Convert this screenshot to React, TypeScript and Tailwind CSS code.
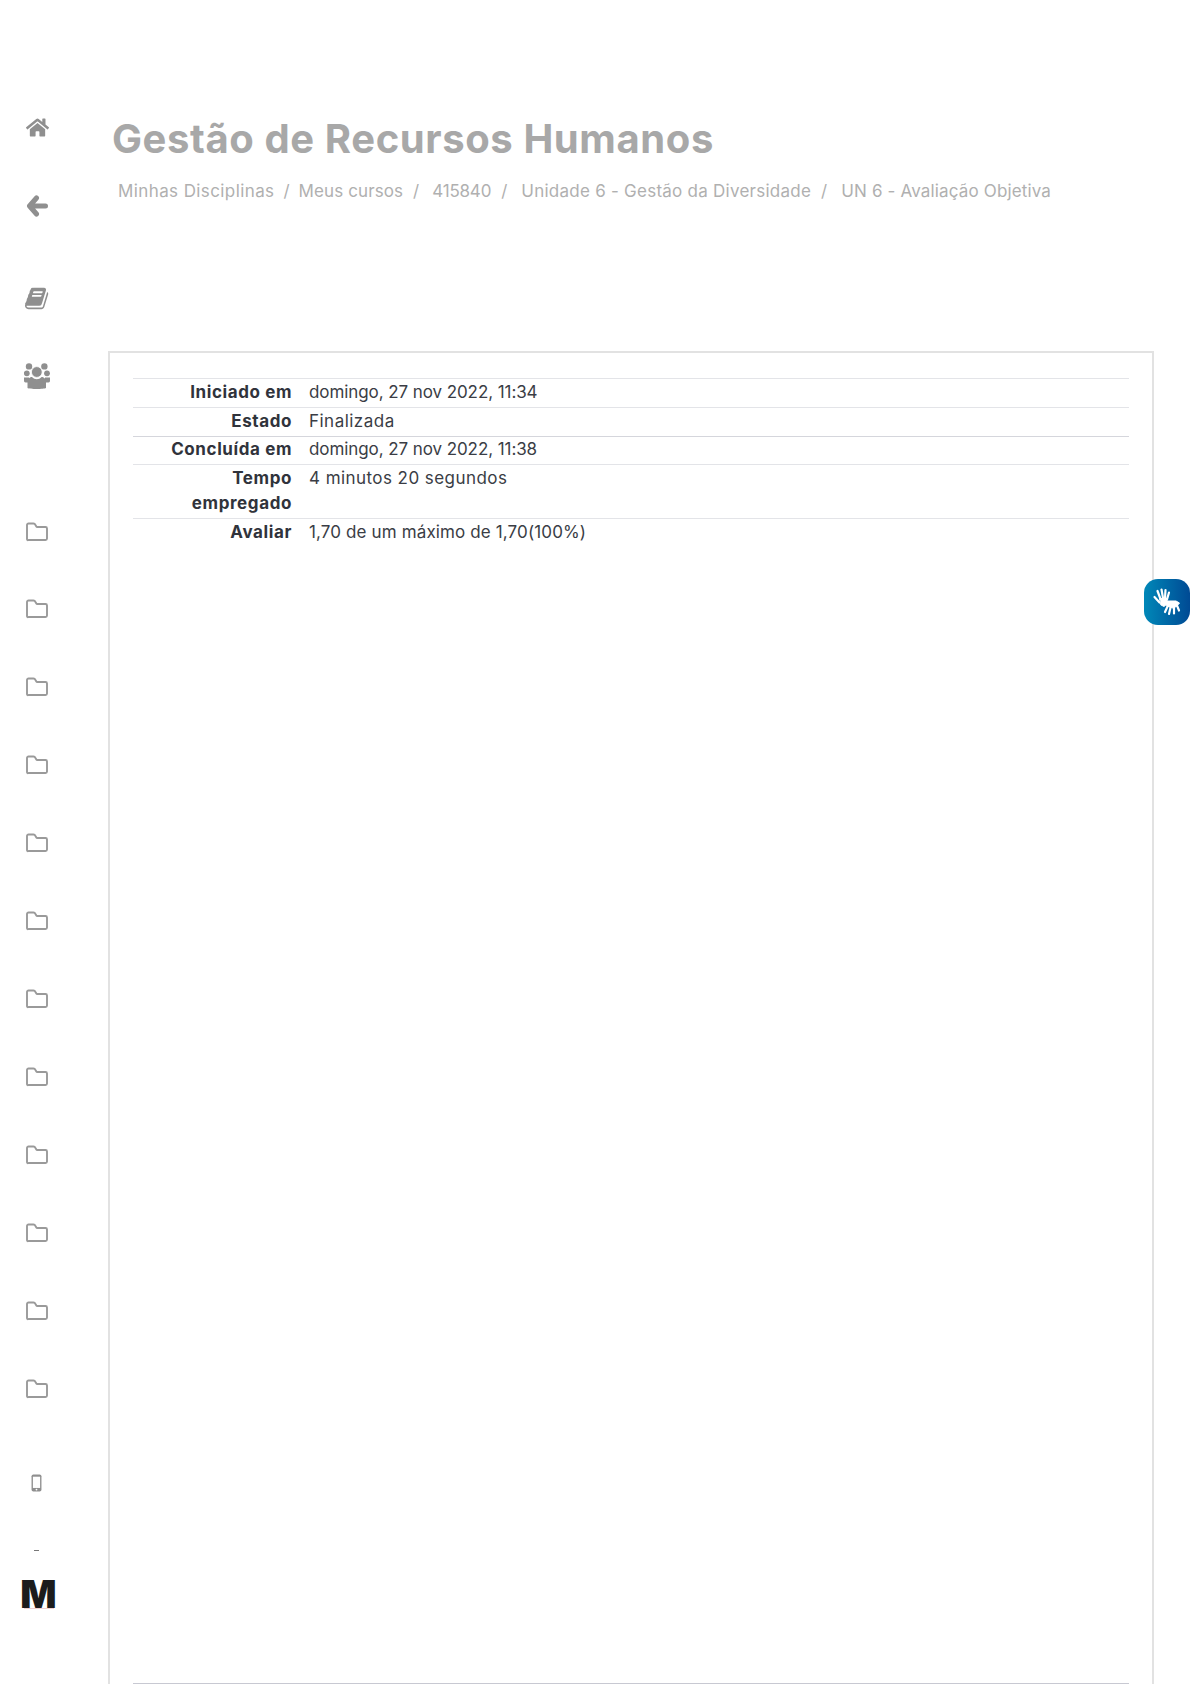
import { FaHome } from "react-icons/fa";

const FONT = "font-['Inter','Liberation_Sans',sans-serif]";

const folders = Array.from({ length: 12 }, (_, i) => i);

const rows = [
  { label: "Iniciado em", value: "domingo, 27 nov 2022, 11:34", h: "h-[29px]", border: "border-[#e3e4e8]", track: "tracking-[-0.08px]", pad: "pt-[1px]" },
  { label: "Estado", value: "Finalizada", h: "h-[29px]", border: "border-[#e3e4e8]", track: "tracking-[0.48px]", pad: "pt-[1px]" },
  { label: "Concluída em", value: "domingo, 27 nov 2022, 11:38", h: "h-[28px]", border: "border-[#d5d6dc]", track: "tracking-[-0.08px]", pad: "pt-0" },
  { label: "Tempo empregado", value: "4 minutos 20 segundos", h: "h-[54px]", border: "border-[#e3e4e8]", track: "tracking-[0.44px]", pad: "pt-[1px]" },
  { label: "Avaliar", value: "1,70 de um máximo de 1,70(100%)", h: "h-[29px]", border: "border-[#e3e4e8]", track: "tracking-[0.13px]", pad: "pt-[1px]" },
];

const Back = () => (
  <svg viewBox="0 0 22 22" className="h-[22px] w-[22px]" fill="none" stroke="#8f8f8f" strokeWidth="5" strokeLinecap="round" strokeLinejoin="round">
    <path d="M10.500 3L3.500 11l7 8M4 11h15.500" />
  </svg>
);

const Book = () => (
  <svg viewBox="0 0 1792 1792" className="w-[25px] h-[25px] fill-[#8f8f8f]">
    <path d="M1639 478q40 57 18 129l-275 906q-19 64-76.5 107.5t-122.5 43.5h-923q-77 0-148.5-53.5t-99.5-131.5q-24-67-2-127 0-4 3-27t4-37q1-8-3-21.5t-3-19.5q2-11 8-21t16.5-23.5 16.5-23.5q23-38 45-91.5t30-91.5q3-10 .5-30t-.5-28q3-11 17-28t17-23q21-36 42-92t25-90q1-9-2.5-32t.5-28q4-13 22-30.5t22-22.5q19-26 42.5-84.5t27.5-96.5q1-8-3-25.5t-2-26.5q2-8 9-18t18-23 17-21q8-12 16.5-30.5t15-35 16-36 19.5-32 26.5-23.5 36-11.5 47.5 5.5l-1 3q38-9 51-9h761q74 0 114 56t18 130l-274 906q-36 119-71.5 153.5t-128.5 34.5h-869q-27 0-38 15-11 16-1 43 24 70 144 70h923q29 0 56-15.5t35-41.5l300-987q7-22 5-57 38 15 59 43zm-1064 2q-4 13 2 22.5t20 9.5h608q13 0 25.5-9.5t16.5-22.5l21-64q4-13-2-22.5t-20-9.5h-608q-13 0-25.5 9.5t-16.5 22.5zm-83 256q-4 13 2 22.5t20 9.5h608q13 0 25.5-9.5t16.5-22.5l21-64q4-13-2-22.5t-20-9.5h-608q-13 0-25.5 9.5t-16.5 22.5z" />
  </svg>
);

const Users = () => (
  <svg viewBox="0 0 26 26" className="w-[26px] h-[26px] fill-[#8f8f8f]">
    <circle cx="5" cy="3.400" r="3.200" />
    <circle cx="20.400" cy="3.400" r="3.200" />
    <circle cx="2.800" cy="10.300" r="2.900" />
    <circle cx="23" cy="10.300" r="2.900" />
    <path d="M0 14.500h5v5H1.500C.5 19.500 0 18.500 0 17.500zM26 14.500h-5v5h3.500c1 0 1.500-1 1.500-2z" />
    <circle cx="12.800" cy="9" r="5.400" stroke="#fff" strokeWidth="0.800" />
    <path d="M3.500 25v-6.500C3.500 15.500 6 14 8 14c1.500 1.500 3 2.200 4.800 2.200s3.300-.7 4.800-2.200c2 0 4.400 1.500 4.400 4.500V25c-2 1.300-16.500 1.300-18.500 0z" />
  </svg>
);

const Folder = () => (
  <svg viewBox="0 0 24 20" className="h-[20px] w-[24px]" fill="none" stroke="#9a9a9a" strokeWidth="1.900" strokeLinejoin="round">
    <path d="M3.500 1.500h5c1 0 1.500.5 2 1.500l.7 1.300c.2.400.5.700 1.100.700h8.200c1 0 1.500.7 1.500 1.500v10c0 1-.7 1.500-1.500 1.500h-17C2.500 18.500 2 18 2 17V3c0-1 .7-1.500 1.500-1.500z" />
  </svg>
);

const Phone = () => (
  <svg viewBox="0 0 12 20" className="w-[11px] h-[18px]">
    <rect x="0.5" y="0.500" width="11" height="19" rx="2" fill="#8f8f8f" />
    <rect x="2" y="3" width="8" height="12.500" fill="#fff" />
    <circle cx="6" cy="17.300" r="1" fill="#fff" />
  </svg>
);

const Hands = () => (
  <svg viewBox="0 0 30 30" className="w-[30px] h-[30px]" fill="none" stroke="#fff" strokeLinecap="round">
    <path d="M5.500 4l3 8M9.500 2.500l1.500 8.500M13.500 3l-.5 8.500M17 5.500l-2 7M2.500 10l5 5.500" strokeWidth="2.200" />
    <path d="M8 11.500h7v5.500l-3 2.500-3-1.500z" fill="#fff" strokeWidth="1" />
    <path d="M14.500 14h9.500l3.500 2-3 3.500-4 1.500-5.500-2z" fill="#fff" strokeWidth="1" />
    <path d="M15.500 19.500l-2.500 5.500M18.500 20.500l-1.500 6.500M22 20.500v6M25 18.500l2 5" strokeWidth="2.200" />
  </svg>
);

export default function App() {
  return (
    <div className={`relative flex h-[1684px] w-[1190px] overflow-hidden bg-white ${FONT}`}>
      <aside className="flex w-[108px] shrink-0 flex-col items-center pr-[35px] pt-[114px] text-[#8f8f8f]">
        <div className="flex h-[26px] items-center pl-[1px]">
          <FaHome className="h-[23px] w-[23px]" />
        </div>
        <div className="mt-[53px] flex h-[26px] items-center pl-[1px]">
          <Back />
        </div>
        <div className="mt-[66px] flex h-[26px] items-center pl-[1px]">
          <Book />
        </div>
        <div className="mt-[52px] flex h-[26px] items-center">
          <Users />
        </div>
        <div className="mt-[129.5px] flex flex-col gap-[51.95px]">
          {folders.map((i) => (
            <div key={i} className="flex h-[26px] items-center">
              <Folder />
            </div>
          ))}
        </div>
        <div className="mt-[72px] flex h-[18px] items-center">
          <Phone />
        </div>
        <div className="mt-[58px] h-px w-[5px] bg-[#777]" />
        <div className="ml-[4px] mt-[30px] flex h-[28px] w-[30px] items-center justify-center overflow-visible border-b border-[#f0d0d0]">
          <span className="font-['Inter'] text-[38px] leading-[26px] font-black text-[#1c1c1c]">M</span>
        </div>
      </aside>

      <main className="flex min-w-0 flex-1 flex-col pr-[36px]">
        <h1 className="mt-[111px] pl-[4px] text-[40px] leading-[56px] font-bold tracking-[0.6px] text-[#a8a8a8]">
          Gestão de Recursos Humanos
        </h1>
        <nav className="mt-[12px] flex h-[26px] items-center pl-[10px] text-[17px] text-[#b0b0b0]">
          <span className="tracking-[0.4px]">Minhas Disciplinas</span>
          <span className="mx-[9px]">/</span>
          <span className="tracking-[0.1px]">Meus cursos</span>
          <span className="ml-[10px] mr-[13px]">/</span>
          <span className="tracking-[-0.2px]">415840</span>
          <span className="ml-[10px] mr-[14px]">/</span>
          <span className="tracking-[0.25px]">Unidade 6 - Gestão da Diversidade</span>
          <span className="ml-[10px] mr-[14px]">/</span>
          <span className="tracking-[0.15px]">UN 6 - Avaliação Objetiva</span>
        </nav>
        <section className="mt-[146px] flex-1 border-2 border-b-0 border-[#e2e2e2] px-[23px] pt-[25px]">
          {rows.map((r) => (
            <div key={r.label} className={`flex border-t ${r.border} ${r.h} text-[17px] leading-[25px]`}>
              <div className={`w-[159px] shrink-0 ${r.pad} text-right font-bold tracking-[0.6px] text-[#30333b]`}>{r.label}</div>
              <div className={`pl-[17px] ${r.pad} ${r.track} text-[#3a3d45]`}>{r.value}</div>
            </div>
          ))}
          <div className="mt-[1136px] border-t border-[#c8c9d2]" />
        </section>
      </main>

      <button className="absolute left-[1144px] top-[579px] flex h-[46px] w-[46px] items-center justify-center rounded-[14px] bg-gradient-to-r from-[#0088b8] to-[#004a94]">
        <Hands />
      </button>
    </div>
  );
}
